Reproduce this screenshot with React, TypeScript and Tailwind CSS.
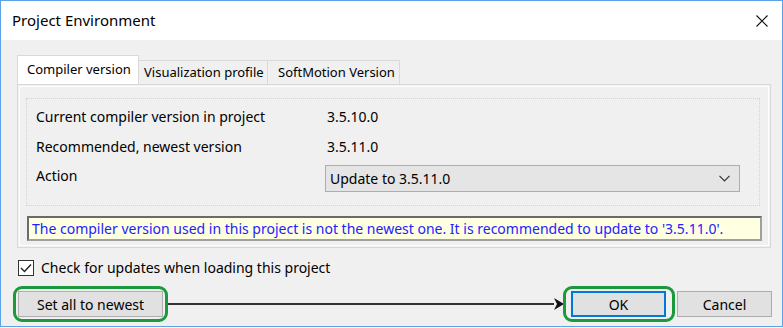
import React from 'react';

const font = { fontFamily: '"Noto Sans", "Open Sans", sans-serif' };

function Btn({ label, focused }: { label: string; focused?: boolean }) {
    return (
        <button
            className={`w-full h-[26px] bg-[#e1e1e1] text-[14px] text-black flex items-center justify-center ${focused ? 'border-2 border-[#0078d7]' : 'border border-[#adadad]'}`}
        >
            {label}
        </button>
    );
}

export default function App() {
    return (
        <div style={font} className="w-[783px] h-[328px] bg-white">
            <div className="w-[783px] h-[327px] border border-[#5ba2ea] flex flex-col">
                {/* title bar */}
                <div className="h-[39px] bg-white flex items-center justify-between pl-[11px] pr-[14px]">
                    <span className="text-[15px] text-black">Project Environment</span>
                    <svg width="12" height="12" viewBox="0 0 12 12">
                        <path d="M0.5 0.5 L11.5 11.5 M11.5 0.5 L0.5 11.5" stroke="#111" strokeWidth="1.1" />
                    </svg>
                </div>

                <div className="flex-1 bg-[#f0f0f0] pl-[16px] pr-[11px] pt-[16px]">
                    {/* tabs */}
                    <div className="flex items-end h-[28px] text-[13px] text-black whitespace-nowrap">
                        <div className="h-[29px] w-[122px] pl-[9px] bg-white border border-b-0 border-[#d9d9d9] flex items-center relative z-10">
                            Compiler version
                        </div>
                        <div className="h-[24px] pl-[5px] w-[129px] bg-[#f0f0f0] border border-l-0 border-b-0 border-[#d9d9d9] flex items-center">
                            Visualization profile
                        </div>
                        <div className="h-[24px] pl-[10px] w-[132px] bg-[#f0f0f0] border border-l-0 border-b-0 border-[#d9d9d9] flex items-center">
                            SoftMotion Version
                        </div>
                    </div>

                    {/* tab panel */}
                    <div className="h-[164px] border border-[#d9d9d9] bg-[#f0f0f0] p-px">
                        <div className="h-full border border-white pl-[6px] pr-[8px] pt-[11px]">
                            <div className="h-[108px] border border-dotted border-[#d4d4d4] pl-[9px] pr-[19px] pt-[4px] text-[14px] text-black whitespace-nowrap">
                                <div className="flex items-center h-[26px]">
                                    <span className="w-[291px]">Current compiler version in project</span>
                                    <span>3.5.10.0</span>
                                </div>
                                <div className="flex items-center h-[26px] mt-[4px]">
                                    <span className="w-[291px]">Recommended, newest version</span>
                                    <span>3.5.11.0</span>
                                </div>
                                <div className="flex items-start h-[32px] mt-[2px]">
                                    <span className="w-[289px] pt-[4px]">Action</span>
                                    <div className="flex-1 h-[27px] mt-[4px] bg-[#e5e5e5] border border-[#adadad] flex items-center justify-between pl-[4px] pr-[9px]">
                                        <span>Update to 3.5.11.0</span>
                                        <svg width="11" height="7" viewBox="0 0 11 7">
                                            <path d="M0.5 0.8 L5.5 5.8 L10.5 0.8" stroke="#333" strokeWidth="1.2" fill="none" />
                                        </svg>
                                    </div>
                                </div>
                            </div>
                            <div className="mt-[10px] ml-[1px] mr-[-2px] h-[25px] bg-[#ffffe1] border-[2px] border-[#6b6b6b] border-r-[#a0a0a0] border-b-[#a0a0a0] flex items-center pl-[3px] text-[14px] text-[#2222ff] whitespace-nowrap overflow-hidden">
                                The compiler version used in this project is not the newest one. It is recommended to update to '3.5.11.0'.
                            </div>
                        </div>
                    </div>

                    {/* checkbox */}
                    <div className="flex items-center mt-[11px] ml-[1px] h-[17px] text-[14px] text-black">
                        <div className="w-[16px] h-[16px] bg-white border border-[#333] flex items-center justify-center">
                            <svg width="12" height="10" viewBox="0 0 12 10">
                                <path d="M1 5 L4.5 8.5 L11 1.5" stroke="#222" strokeWidth="1.4" fill="none" />
                            </svg>
                        </div>
                        <span className="ml-[7px]">Check for updates when loading this project</span>
                    </div>

                    {/* buttons */}
                    <div className="flex items-center mt-[10px] ml-[-4px] mr-[-1px]">
                        <div className="w-[155px] h-[36px] rounded-[9px] border-[3px] border-[#1a9a3c] flex items-center pl-[2px]">
                            <div className="w-[145px]">
                                <Btn label="Set all to newest" />
                            </div>
                        </div>
                        <div className="flex-1 flex items-center h-[10px]">
                            <div className="flex-1 h-[2px] bg-[#333]" />
                            <svg width="10" height="12" viewBox="0 0 10 12" className="mr-[-1px]">
                                <path d="M0 0 L10 6 L0 12 L3 6 Z" fill="#111" />
                            </svg>
                        </div>
                        <div className="w-[112px] h-[36px] rounded-[9px] border-[3px] border-[#1a9a3c] flex items-center pl-[5px]">
                            <div className="w-[95px]">
                                <Btn label="OK" focused />
                            </div>
                        </div>
                        <div className="w-[95px] ml-[2px]">
                            <Btn label="Cancel" />
                        </div>
                    </div>
                </div>
            </div>
        </div>
    );
}
